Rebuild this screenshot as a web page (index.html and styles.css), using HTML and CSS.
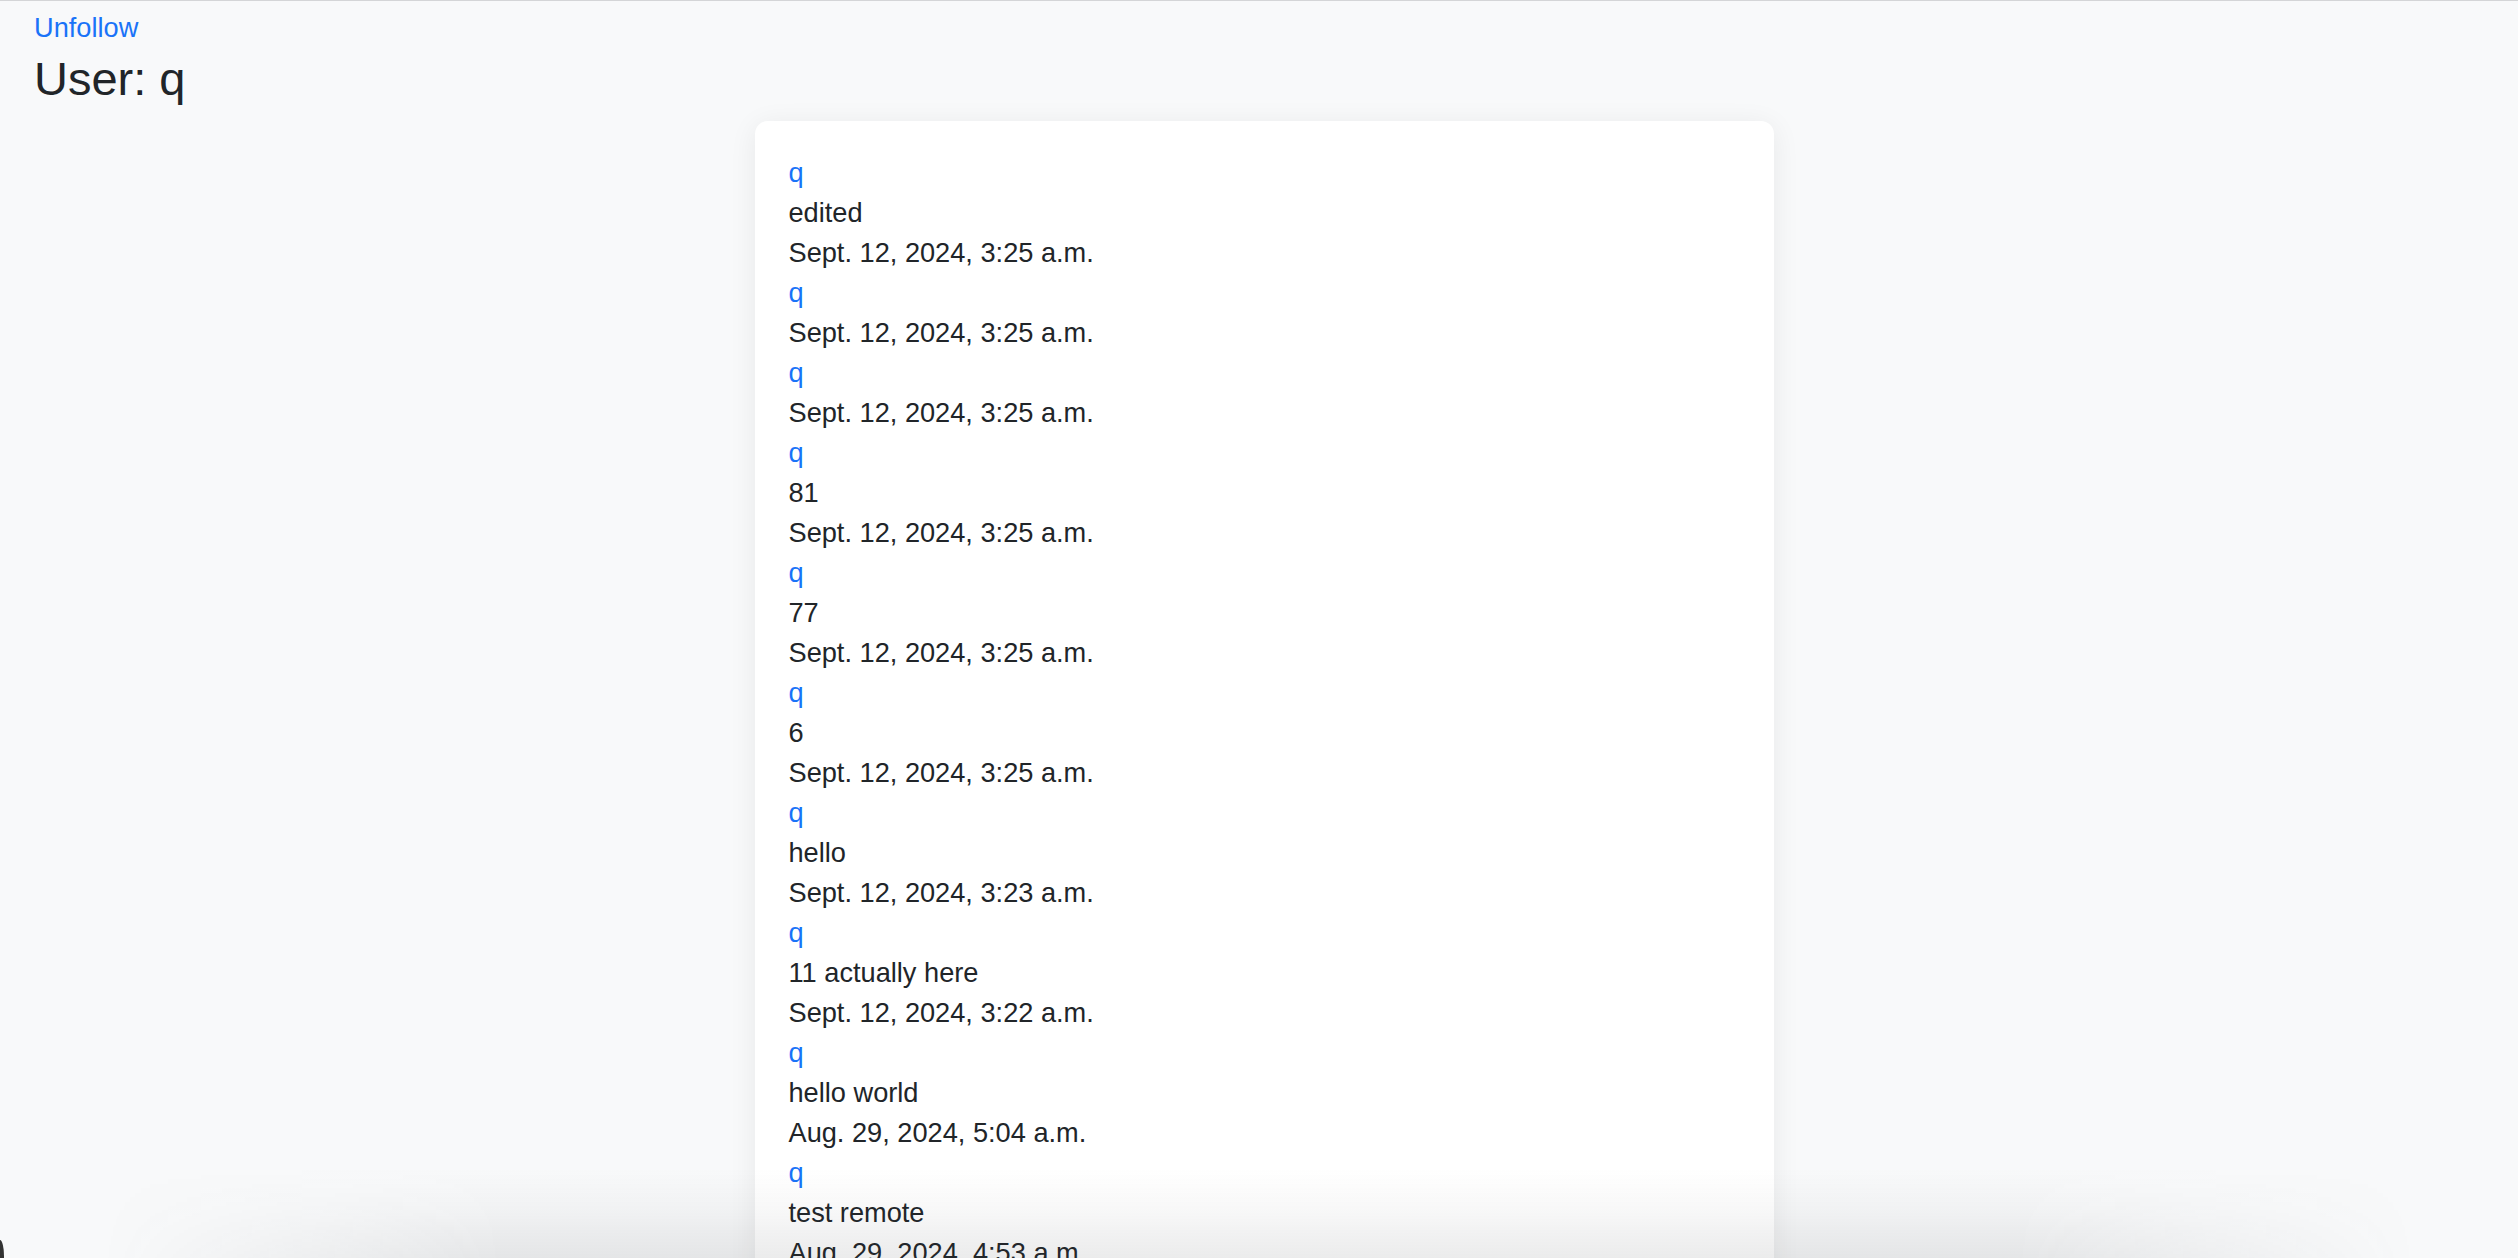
FILE: index.html
```html
<!DOCTYPE html>
<html lang="en">
<head>
<meta charset="utf-8">
<title>User: q</title>
<link rel="stylesheet" href="styles.css">
</head>
<body>
<div class="page">
  <a class="follow" href="#">Unfollow</a>
  <h2 class="title">User: q</h2>
  <div class="feed">
    <div class="card">
      <div class="post"><a class="author" href="#">q</a><div class="body">edited</div><div class="date">Sept. 12, 2024, 3:25 a.m.</div></div>
      <div class="post"><a class="author" href="#">q</a><div class="date">Sept. 12, 2024, 3:25 a.m.</div></div>
      <div class="post"><a class="author" href="#">q</a><div class="date">Sept. 12, 2024, 3:25 a.m.</div></div>
      <div class="post"><a class="author" href="#">q</a><div class="body">81</div><div class="date">Sept. 12, 2024, 3:25 a.m.</div></div>
      <div class="post"><a class="author" href="#">q</a><div class="body">77</div><div class="date">Sept. 12, 2024, 3:25 a.m.</div></div>
      <div class="post"><a class="author" href="#">q</a><div class="body">6</div><div class="date">Sept. 12, 2024, 3:25 a.m.</div></div>
      <div class="post"><a class="author" href="#">q</a><div class="body">hello</div><div class="date">Sept. 12, 2024, 3:23 a.m.</div></div>
      <div class="post"><a class="author" href="#">q</a><div class="body">11 actually here</div><div class="date">Sept. 12, 2024, 3:22 a.m.</div></div>
      <div class="post"><a class="author" href="#">q</a><div class="body">hello world</div><div class="date">Aug. 29, 2024, 5:04 a.m.</div></div>
      <div class="post"><a class="author" href="#">q</a><div class="body">test remote</div><div class="date">Aug. 29, 2024, 4:53 a.m.</div></div>
      <div class="post"><a class="author" href="#">q</a><div class="body">test</div><div class="date">Aug. 29, 2024, 4:50 a.m.</div></div>
      <div class="post"><a class="author" href="#">q</a><div class="body">first post</div><div class="date">Aug. 29, 2024, 4:41 a.m.</div></div>
    </div>
  </div>
</div>
<div class="bottom-shade"></div>
<div class="corner"></div>
</body>
</html>
```

FILE: styles.css
```css
html, body {
  margin: 0;
  padding: 0;
}
body {
  background: #f8f9fa;
  color: #212529;
  font-family: "Liberation Sans", Arial, sans-serif;
  font-size: 27.2px;
  line-height: 40px;
}
.page {
  border-top: 1px solid #d4d5d7;
  padding: 7px 0 60px 34px;
}
a {
  color: #1a73f8;
  text-decoration: none;
}
.follow {
  display: inline-block;
}
.title {
  margin: 1.6px 0 13px 0;
  font-size: 47px;
  font-weight: 400;
  line-height: 58px;
}
.feed {
  padding-left: 721px;
}
.card {
  width: 1019px;
  box-sizing: border-box;
  background: #fff;
  border-radius: 13px;
  padding: 32.5px 33.5px;
  box-shadow: 0 4px 28px rgba(0, 0, 0, 0.07);
}
.author, .body, .date {
  display: block;
}
.bottom-shade {
  position: fixed;
  left: 0;
  right: 0;
  bottom: 0;
  height: 90px;
  pointer-events: none;
  background: linear-gradient(to bottom, rgba(60, 62, 66, 0) 0%, rgba(60, 62, 66, 0.035) 45%, rgba(60, 62, 66, 0.1) 100%);
  -webkit-mask-image: linear-gradient(to right, transparent 4%, #000 20%, #000 80%, transparent 96%);
  mask-image: linear-gradient(to right, transparent 4%, #000 20%, #000 80%, transparent 96%);
}
.corner {
  position: fixed;
  left: 0;
  bottom: 0;
  width: 4px;
  height: 18px;
  background: #000;
  border-top-right-radius: 4px 16px;
  opacity: 0.8;
}
```
